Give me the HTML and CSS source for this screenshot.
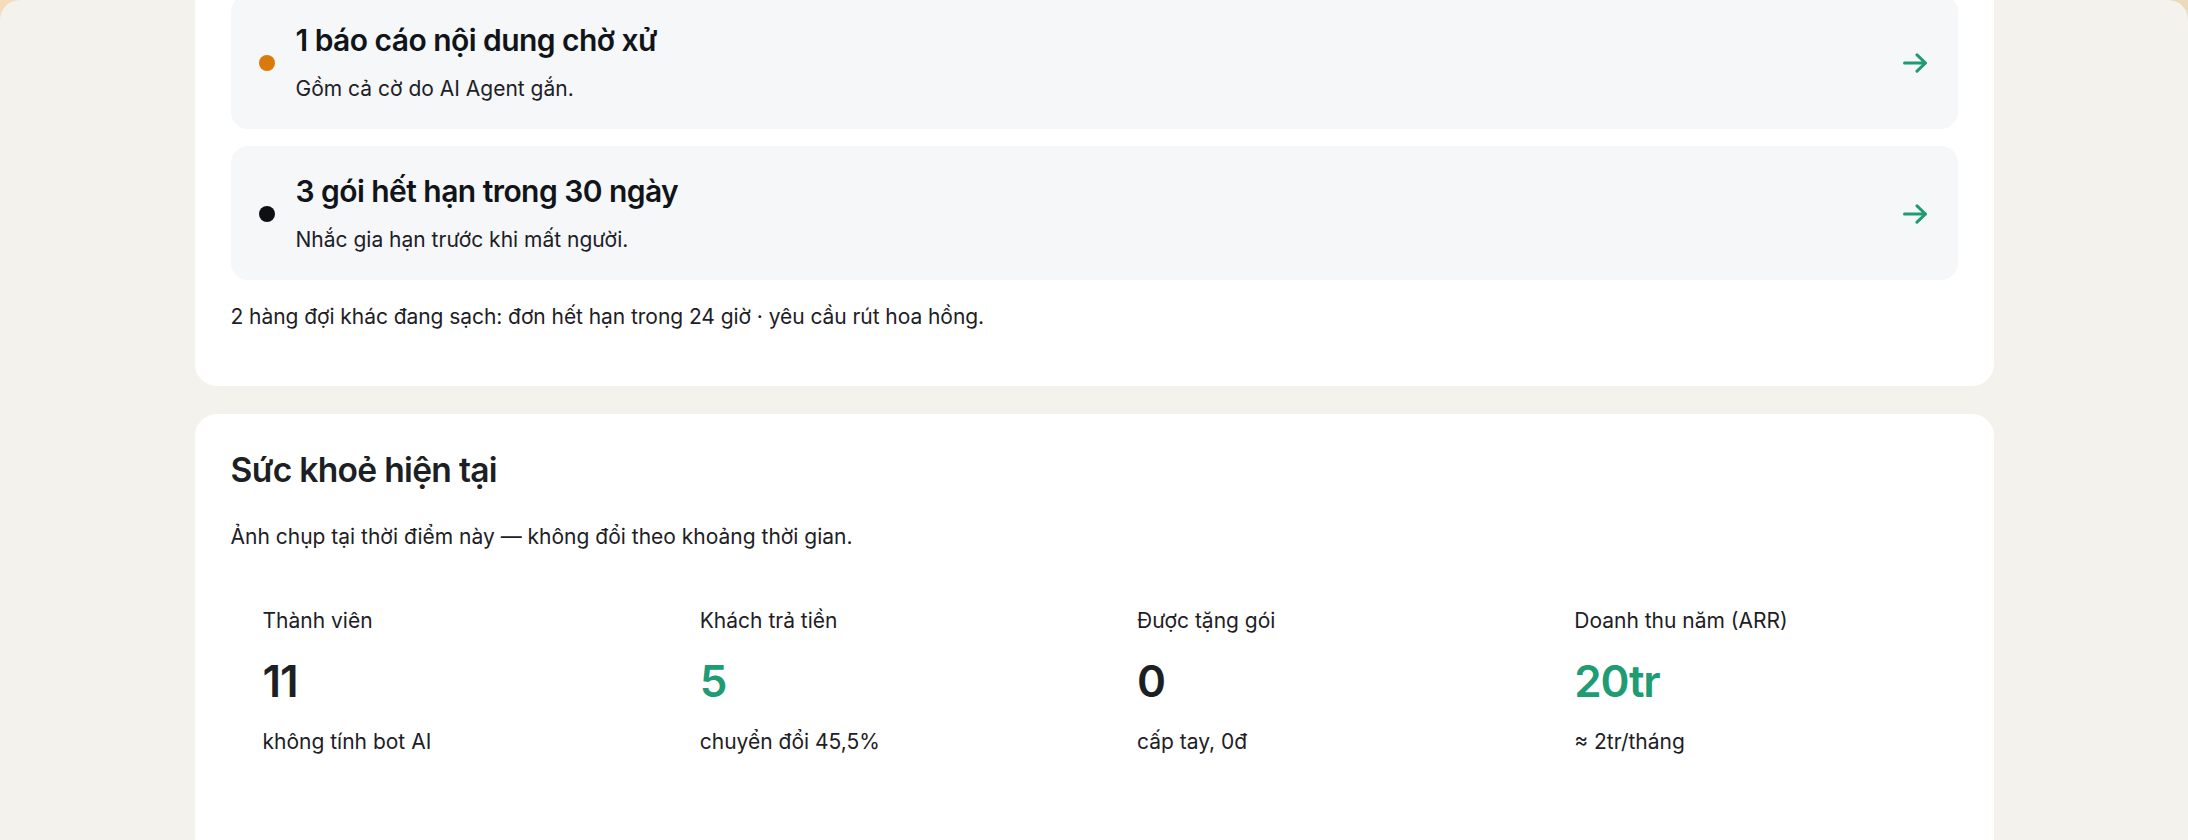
FILE: index.html
```html
<!DOCTYPE html>
<html lang="vi">
<head>
<meta charset="utf-8">
<title>Tổng quan</title>
<link rel="stylesheet" href="styles.css">
</head>
<body>
<div class="panel">
  <main class="content">
    <section class="card queue">
      <div class="items">
        <a class="item">
          <span class="dot dot-amber"></span>
          <div class="item-text">
            <div class="item-title">1 báo cáo nội dung chờ xử</div>
            <div class="item-sub">Gồm cả cờ do AI Agent gắn.</div>
          </div>
          <svg class="arrow" viewBox="0 0 25 20" width="25" height="20"><path d="M1.5 10H22.5M14 1.8L22.5 10L14 18.2"/></svg>
        </a>
        <a class="item">
          <span class="dot dot-black"></span>
          <div class="item-text">
            <div class="item-title">3 gói hết hạn trong 30 ngày</div>
            <div class="item-sub">Nhắc gia hạn trước khi mất người.</div>
          </div>
          <svg class="arrow" viewBox="0 0 25 20" width="25" height="20"><path d="M1.5 10H22.5M14 1.8L22.5 10L14 18.2"/></svg>
        </a>
      </div>
      <p class="note">2 hàng đợi khác đang sạch: đơn hết hạn trong 24 giờ · yêu cầu rút hoa hồng.</p>
    </section>

    <section class="card health">
      <h2 class="card-title">Sức khoẻ hiện tại</h2>
      <p class="card-desc">Ảnh chụp tại thời điểm này — không đổi theo khoảng thời gian.</p>
      <div class="stats">
        <div class="stat">
          <div class="stat-label">Thành viên</div>
          <div class="stat-value">11</div>
          <div class="stat-sub">không tính bot AI</div>
        </div>
        <div class="stat">
          <div class="stat-label">Khách trả tiền</div>
          <div class="stat-value green">5</div>
          <div class="stat-sub">chuyển đổi 45,5%</div>
        </div>
        <div class="stat">
          <div class="stat-label">Được tặng gói</div>
          <div class="stat-value">0</div>
          <div class="stat-sub">cấp tay, 0đ</div>
        </div>
        <div class="stat">
          <div class="stat-label">Doanh thu năm (ARR)</div>
          <div class="stat-value green">20tr</div>
          <div class="stat-sub">≈ 2tr/tháng</div>
        </div>
      </div>
    </section>
  </main>
</div>
</body>
</html>
```

FILE: styles.css
```css
html, body {
  margin: 0;
  padding: 0;
}

body {
  height: 840px;
  overflow: hidden;
  background: linear-gradient(90deg, #f6dbbd 0%, #f1dcc0 50%, #ebdbbb 100%);
  font-family: Inter, "Noto Sans", "DejaVu Sans", sans-serif;
  color: #16191d;
  -webkit-font-smoothing: antialiased;
}

.panel {
  height: 840px;
  background: #f4f2ec;
  border-radius: 20px 20px 0 0;
  overflow: hidden;
}

.content {
  width: 1799px;
  margin: 0 auto;
  display: flex;
  flex-direction: column;
  gap: 28px;
}

.card {
  background: #ffffff;
  border-radius: 22px;
}

.queue {
  margin-top: -41px;
  padding: 36px 36px 54px;
}

.items {
  display: flex;
  flex-direction: column;
  gap: 17px;
}

.item {
  display: flex;
  align-items: center;
  background: #f5f7f9;
  border-radius: 17px;
  padding: 26px 30px 25px 28px;
  text-decoration: none;
  color: inherit;
}

.dot {
  width: 16px;
  height: 16px;
  border-radius: 50%;
  flex: none;
  margin-right: 21px;
}

.dot-amber { background: #d97a0b; }
.dot-black { background: #0d0f12; }

.item-text {
  flex: 1;
}

.item-title {
  font-size: 30px;
  line-height: 39px;
  font-weight: 600;
  color: #111418;
  letter-spacing: -0.55px;
}

.item-sub {
  margin-top: 13px;
  font-size: 21px;
  line-height: 31px;
  color: #1d2025;
}

.arrow {
  flex: none;
  fill: none;
  stroke: #1f9a72;
  stroke-width: 3;
  stroke-linecap: round;
  stroke-linejoin: round;
}

.note {
  margin: 21px 0 0;
  font-size: 21px;
  line-height: 31px;
  color: #1d2025;
  letter-spacing: -0.06px;
}

.health {
  padding: 35px 36px 60px;
  min-height: 420px;
}

.card-title {
  margin: 0;
  font-size: 33.6px;
  line-height: 42px;
  font-weight: 600;
  color: #1c1f24;
  letter-spacing: -0.7px;
}

.card-desc {
  margin: 30px 0 0;
  font-size: 21px;
  line-height: 31px;
  color: #1d2025;
}

.stats {
  margin-top: 31px;
  display: grid;
  grid-template-columns: repeat(4, 1fr);
  gap: 22px;
}

.stat {
  padding: 22px 32px;
}

.stat-label {
  font-size: 21px;
  line-height: 31px;
  color: #1d2025;
}

.stat-value {
  margin-top: 19px;
  font-size: 44px;
  line-height: 53px;
  font-weight: 600;
  color: #1c1f24;
  letter-spacing: -1.2px;
}

.stat-value.green {
  color: #209c74;
}

.stat-sub {
  margin-top: 18px;
  font-size: 21px;
  line-height: 31px;
  color: #1d2025;
}
```
